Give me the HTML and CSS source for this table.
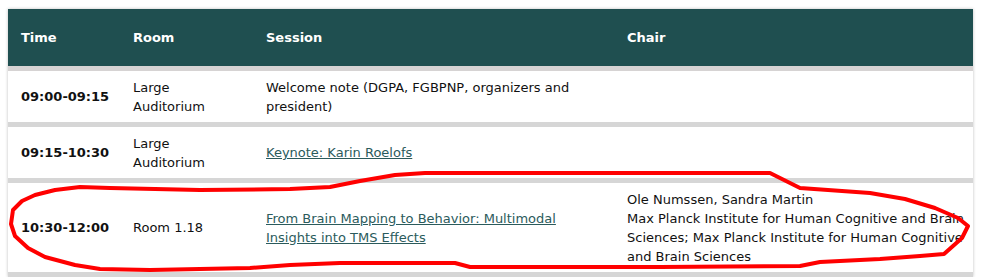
FILE: index.html
```html
<!DOCTYPE html>
<html>
<head>
<meta charset="utf-8">
<link rel="stylesheet" href="styles.css">
</head>
<body>
<table class="schedule">
  <colgroup>
    <col class="c-time">
    <col class="c-room">
    <col class="c-session">
    <col class="c-chair">
  </colgroup>
  <thead>
    <tr>
      <th>Time</th>
      <th>Room</th>
      <th>Session</th>
      <th>Chair</th>
    </tr>
  </thead>
  <tbody>
    <tr>
      <td class="time">09:00-09:15</td>
      <td>Large Auditorium</td>
      <td>Welcome note (DGPA, FGBPNP, organizers and president)</td>
      <td></td>
    </tr>
    <tr>
      <td class="time">09:15-10:30</td>
      <td>Large Auditorium</td>
      <td><a href="#">Keynote: Karin Roelofs</a></td>
      <td></td>
    </tr>
    <tr>
      <td class="time">10:30-12:00</td>
      <td>Room 1.18</td>
      <td><a href="#">From Brain Mapping to Behavior: Multimodal Insights into TMS Effects</a></td>
      <td>Ole Numssen, Sandra Martin<br>Max Planck Institute for Human Cognitive and Brain Sciences; Max Planck Institute for Human Cognitive and Brain Sciences</td>
    </tr>
  </tbody>
</table>
<svg class="mark" width="998" height="277" viewBox="0 0 998 277">
  <path d="M110 188 L200 190 L290 189 L330 187 L360 181 L395 175 L425 173 L660 173 L770 173 L782 179 L800 188 L870 193 L905 199 L935 208 L958 218 L968 226 L962 238 L953 246 L944 254 L920 256 L880 259 L820 262 L800 266 L660 267 L470 267 L455 263 L340 263 L290 265 L250 268 L150 270 L100 269 L75 265 L45 257 L28 248 L15 236 L11 224 L13 210 L22 201 L35 195 L55 190 L80 187 Z" fill="none" stroke="#ff0000" stroke-width="4" stroke-linejoin="round"/>
</svg>
</body>
</html>
```
FILE: styles.css
```css
html, body {
  margin: 0;
  padding: 0;
  background: #ffffff;
}
body {
  padding: 9px 8px 0 8px;
  font-family: "DejaVu Sans", sans-serif;
  font-size: 13px;
  line-height: 19px;
  color: #111111;
}
.schedule {
  width: 965px;
  border-collapse: collapse;
  table-layout: fixed;
  box-shadow: 0 0 3px rgba(0, 0, 0, 0.25);
}
.c-time { width: 112px; }
.c-room { width: 133px; }
.c-session { width: 361px; }
.c-chair { width: 359px; }
.schedule th,
.schedule td {
  box-sizing: border-box;
}
.schedule th {
  background: #1f4f50;
  color: #ffffff;
  font-weight: bold;
  text-align: left;
  padding: 19px 8px 19px 13px;
  border-bottom: 5px solid #d6d3d3;
}
.schedule td {
  background: #ffffff;
  padding: 6.5px 8px 6.5px 13px;
  vertical-align: middle;
  border-bottom: 5px solid #d6d6d6;
}
.schedule td.time {
  font-weight: bold;
}
.schedule a {
  color: #2b5b5c;
  text-decoration: underline;
}
.mark {
  position: absolute;
  left: 0;
  top: 0;
  pointer-events: none;
}
```
